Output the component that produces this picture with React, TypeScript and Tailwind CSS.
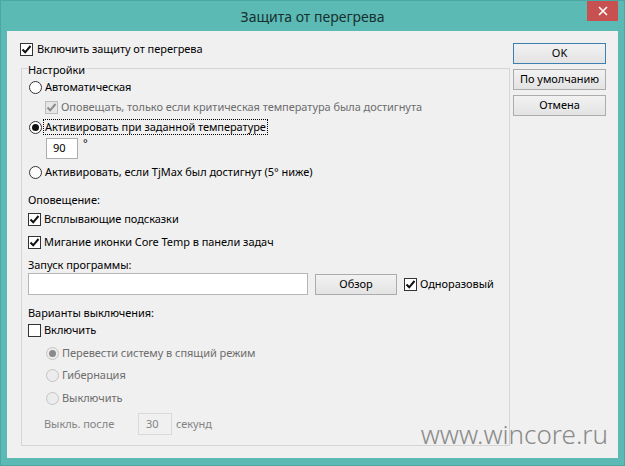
import React from "react";

const FONT = { fontFamily: '"Segoe UI", "Noto Sans", "Open Sans", sans-serif' };

function Check({ checked, disabled }: { checked?: boolean; disabled?: boolean }) {
  return (
    <span
      className={
        "flex h-[13px] w-[13px] shrink-0 items-center justify-center border " +
        (disabled ? "border-[#bcbcbc] bg-[#e6e6e6]" : "border-[#333333] bg-white")
      }
    >
      {checked && (
        <svg width="11" height="11" viewBox="0 0 11 11">
          <path
            d="M1.5 5.5 L4.2 8.3 L9.5 2"
            fill="none"
            stroke={disabled ? "#8b8b8b" : "#111111"}
            strokeWidth="2"
          />
        </svg>
      )}
    </span>
  );
}

function Radio({ checked, disabled }: { checked?: boolean; disabled?: boolean }) {
  return (
    <span
      className={
        "flex h-[13px] w-[13px] shrink-0 items-center justify-center rounded-full border " +
        (disabled ? "border-[#c4c4c4] bg-[#ececec]" : "border-[#333333] bg-white")
      }
    >
      {checked && (
        <span
          className={
            "h-[7px] w-[7px] rounded-full " + (disabled ? "bg-[#8a8a8a]" : "bg-[#111111]")
          }
        />
      )}
    </span>
  );
}

function Btn({ label, primary }: { label: string; primary?: boolean }) {
  return (
    <div
      className={
        "flex h-[21px] w-[93px] items-center justify-center border bg-gradient-to-b from-[#f2f2f2] to-[#e3e3e3] text-black " +
        (primary ? "border-[#3c7fb1]" : "border-[#acacac]")
      }
    >
      {label}
    </div>
  );
}

export default function App() {
  return (
    <div
      className="relative h-[466px] w-[625px] overflow-hidden border border-[#4aa7a2] bg-[#5cbab5]"
      style={FONT}
    >
      {/* title bar */}
      <div className="relative flex h-[30px] items-center justify-center">
        <span className="text-[14px] text-[#17302f]">Защита от перегрева</span>
        <div className="absolute right-[6px] top-[-1px] flex h-[21px] w-[31px] items-center justify-center bg-[#c75050]">
          <svg width="10" height="10" viewBox="0 0 10 10">
            <path d="M1 1 L9 9 M9 1 L1 9" stroke="white" strokeWidth="1.6" />
          </svg>
        </div>
      </div>

      {/* client area */}
      <div className="mx-[6px] flex h-[427px] bg-[#f0f0f0] text-[11px] tracking-[-0.05px] text-black">
        <div className="w-[503px] pl-[13px] pt-[12px]">
          <div className="flex h-[13px] items-center gap-[4px]">
            <Check checked />
            <span>Включить защиту от перегрева</span>
          </div>

          <div className="ml-[1px] mt-[12px] border border-[#d5d5d5] pb-[10px] pl-[6px]">
            <div className="-mt-[7px] flex h-[16px] items-center">
              <span className="bg-[#f0f0f0] pr-[1px]">Настройки</span>
            </div>
            <div className="ml-[1px] mt-[1px] flex h-[16px] items-center gap-[3px]">
              <Radio />
              <span>Автоматическая</span>
            </div>
            <div className="ml-[17px] mt-[4px] flex h-[16px] items-center gap-[3px] text-[#6d6d6d]">
              <Check checked disabled />
              <span>Оповещать, только если критическая температура была достигнута</span>
            </div>
            <div className="ml-[1px] mt-[4px] flex h-[16px] items-center gap-[1px]">
              <Radio checked />
              <span className="border border-dotted border-black px-[1px] leading-[14px]">
                Активировать при заданной температуре
              </span>
            </div>
            <div className="ml-[18px] mt-[3px] flex h-[21px] items-start gap-[5px]">
              <div className="flex h-[21px] w-[32px] items-center border border-[#abadb3] bg-white pl-[6px]">
                90
              </div>
              <span className="-mt-[3px]">°</span>
            </div>
            <div className="ml-[1px] mt-[5px] flex h-[16px] items-center gap-[3px]">
              <Radio />
              <span>Активировать, если TjMax был достигнут (5° ниже)</span>
            </div>

            <div className="mt-[12px] flex h-[16px] items-center">Оповещение:</div>
            <div className="mt-[3px] flex h-[16px] items-center gap-[3px]">
              <Check checked />
              <span>Всплывающие подсказки</span>
            </div>
            <div className="mt-[7px] flex h-[16px] items-center gap-[3px]">
              <Check checked />
              <span>Мигание иконки Core Temp в панели задач</span>
            </div>
            <div className="mt-[7px] flex h-[16px] items-center">Запуск программы:</div>
            <div className="flex h-[22px] items-center">
              <div className="h-[22px] w-[280px] border border-[#b5b5b5] bg-white" />
              <div className="ml-[7px] flex h-[21px] w-[82px] items-center justify-center border border-[#acacac] bg-gradient-to-b from-[#f2f2f2] to-[#e3e3e3]">
                Обзор
              </div>
              <div className="ml-[7px] flex items-center gap-[3px]">
                <Check checked />
                <span>Одноразовый</span>
              </div>
            </div>

            <div className="mt-[10px] flex h-[16px] items-center">Варианты выключения:</div>
            <div className="mt-[1px] flex h-[16px] items-center gap-[3px]">
              <Check />
              <span>Включить</span>
            </div>
            <div className="ml-[18px] mt-[7px] flex h-[16px] items-center gap-[3px] text-[#6d6d6d]">
              <Radio checked disabled />
              <span>Перевести систему в спящий режим</span>
            </div>
            <div className="ml-[18px] mt-[6px] flex h-[16px] items-center gap-[3px] text-[#6d6d6d]">
              <Radio disabled />
              <span>Гибернация</span>
            </div>
            <div className="ml-[18px] mt-[7px] flex h-[16px] items-center gap-[3px] text-[#6d6d6d]">
              <Radio disabled />
              <span>Выключить</span>
            </div>
            <div className="ml-[16px] mt-[7px] flex h-[22px] items-center text-[#838383]">
              <span className="w-[94px]">Выкль. после</span>
              <div className="flex h-[22px] w-[34px] items-center border border-[#d9d9d9] bg-[#f0f0f0] pl-[7px]">
                30
              </div>
              <span className="ml-[4px]">секунд</span>
            </div>
          </div>
        </div>

        <div className="ml-[3px] flex flex-col gap-[5px] pt-[12px]">
          <Btn label="OK" primary />
          <Btn label="По умолчанию" />
          <Btn label="Отмена" />
        </div>
      </div>

      {/* watermark */}
      <div className="pointer-events-none absolute bottom-[18px] right-[16px] text-[26px] font-light leading-none text-[#8a8a8a]">
        www.wincore.ru
      </div>
    </div>
  );
}
